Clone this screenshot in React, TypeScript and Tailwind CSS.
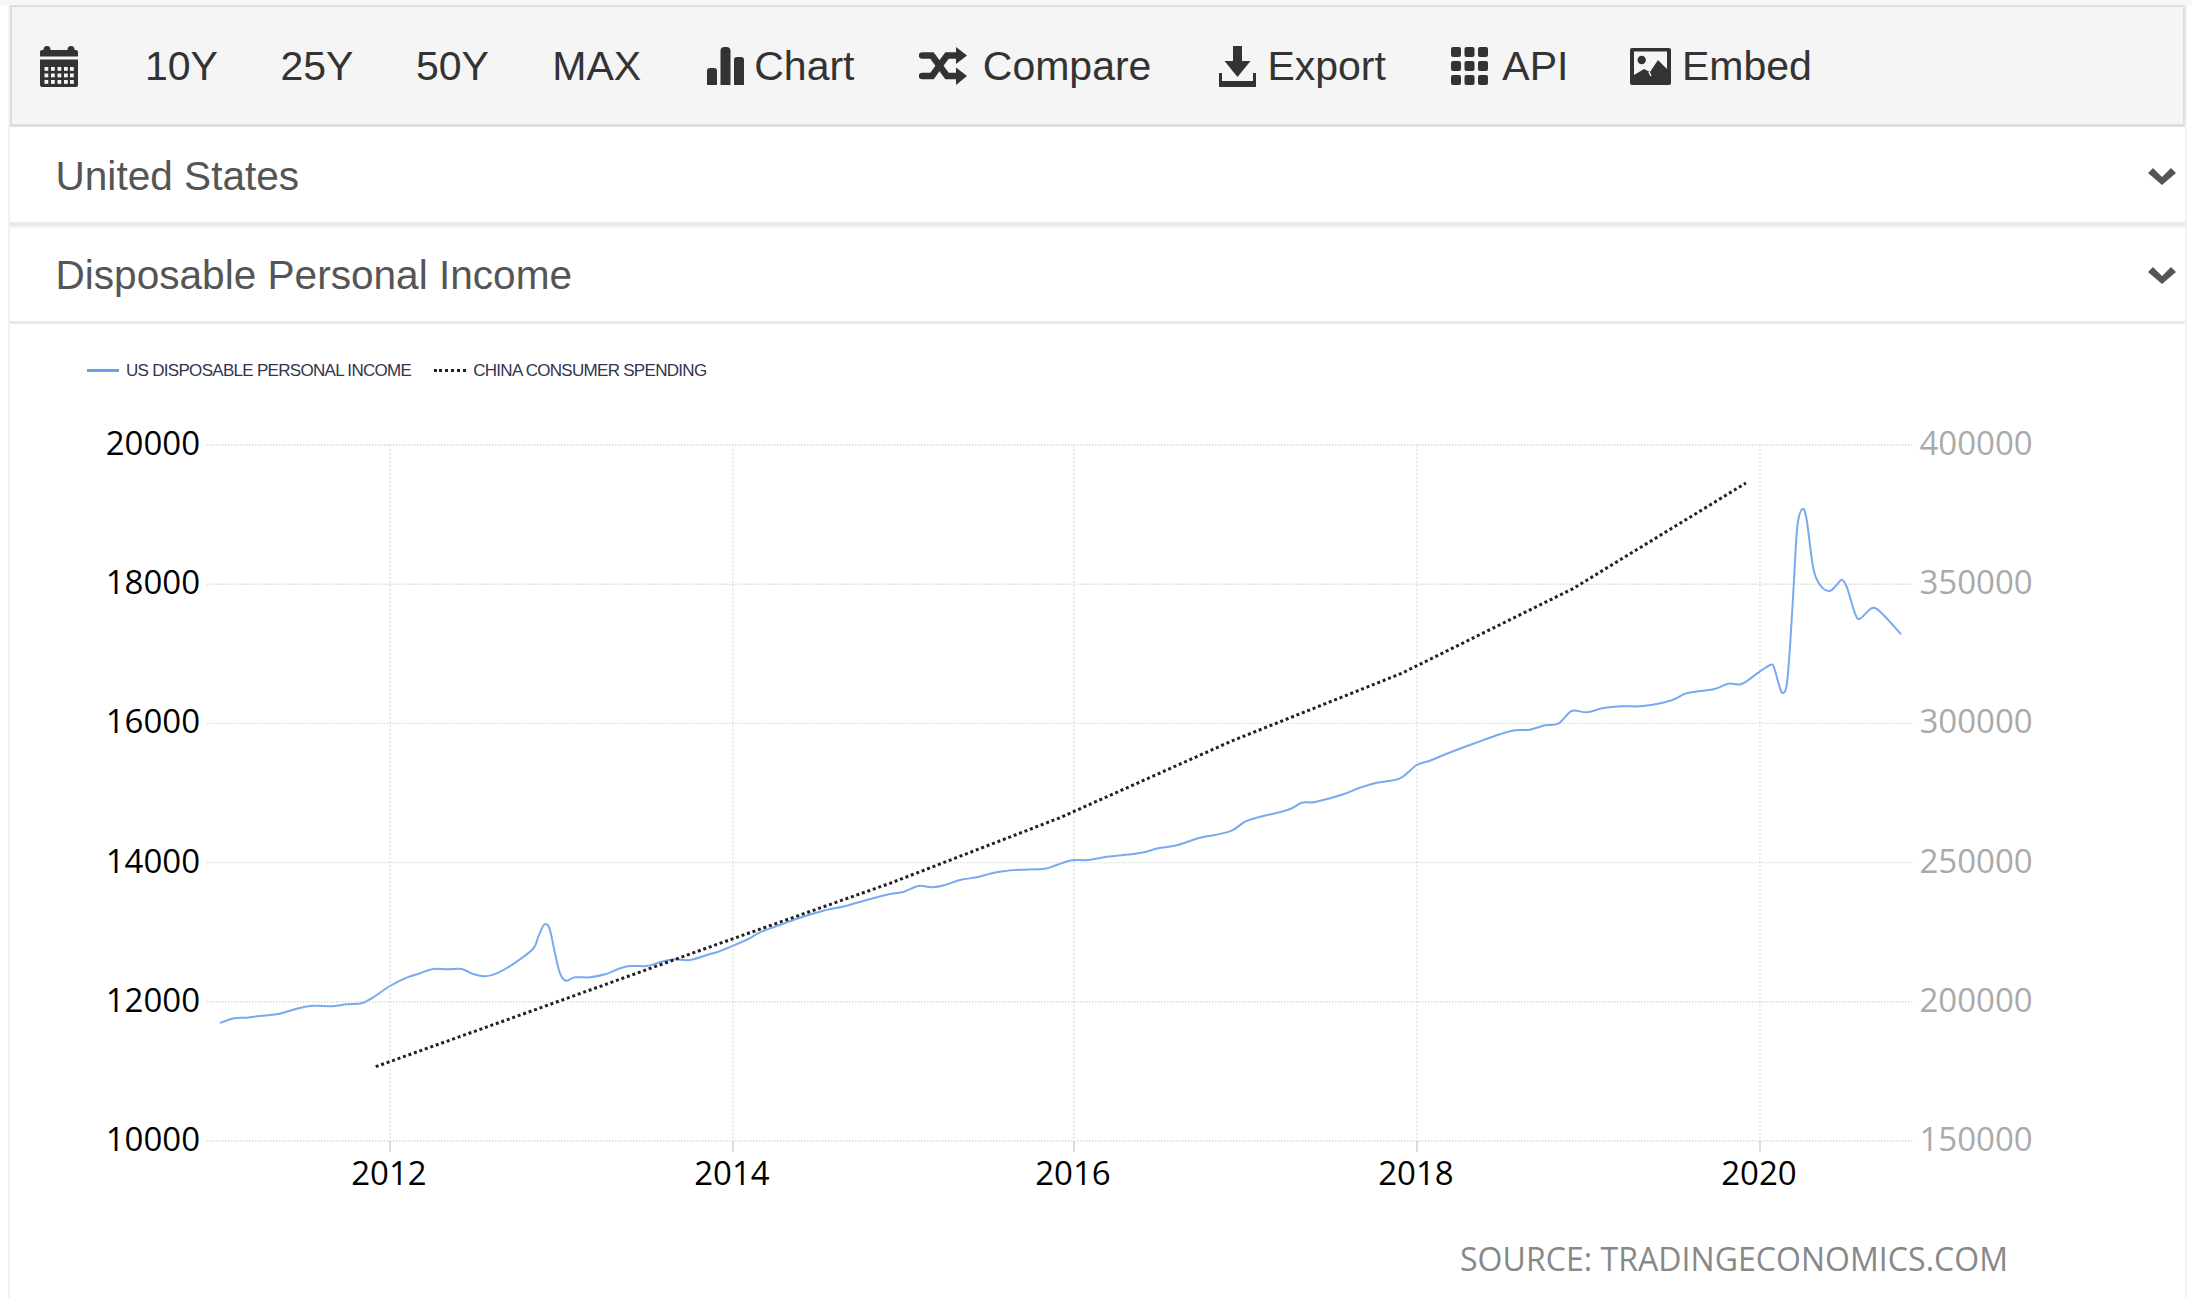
import type { ReactNode } from "react"

type Pt = [number, number]

// traced from the chart, page pixels
const income: Pt[] = [
  [220, 1023], [234, 1018.3], [246.7, 1017.7], [260, 1016], [276.7, 1014.3], [290, 1010.7], [305, 1006.7], [316.7, 1005.7],
  [331.7, 1006.3], [346.7, 1004.3], [361.7, 1003.3], [373.3, 997.3], [390, 986], [406.7, 977.7], [420, 973.3], [433.3, 969],
  [446.7, 969.3], [461.7, 969], [473.3, 974], [485, 976.3], [496.7, 973.3], [511.7, 965], [532.7, 949.3], [538.3, 936.7],
  [543.3, 925.7], [546.7, 924.3], [550, 930], [555, 953.3], [560, 973.3], [566, 980.7], [575, 977.3], [590, 977.3],
  [605, 974.3], [621.7, 967.7], [633.3, 966], [646.7, 966], [660, 962.3], [673.3, 959.3], [690, 960], [710, 954],
  [718.3, 951.7], [733.3, 945.7], [748.3, 939], [760, 932.3], [780, 925], [800, 917.7], [823.3, 910.7], [846.7, 905.7],
  [866.7, 900], [890, 894], [903.3, 892], [918.3, 886], [931.7, 887.3], [945, 885], [960, 880], [976.7, 877.3],
  [990, 873.7], [1003.3, 871.3], [1020, 869.7], [1045, 868.7], [1056.7, 865], [1071.7, 860.3], [1088.3, 860], [1106.7, 856.7],
  [1133.3, 854], [1145, 852], [1158.3, 848.3], [1176.7, 845.3], [1200, 837.8], [1215, 835], [1231.7, 830.7], [1245, 821.7],
  [1256.7, 817.7], [1288.3, 809.7], [1301.7, 802.7], [1315, 802], [1343.3, 794.3], [1360, 787.7], [1376.7, 782.7], [1400, 778.3],
  [1416.7, 765], [1430, 760.7], [1446.7, 753.7], [1473.3, 743.7], [1500, 734.3], [1515, 730.3], [1530, 729.7], [1545, 725.3],
  [1558.3, 723.7], [1571.7, 711], [1586.7, 712.3], [1603.3, 708], [1623.3, 706.3], [1643.3, 706], [1671, 700.5], [1686.7, 693.3],
  [1713.3, 689.3], [1728.3, 683.7], [1741.7, 684], [1758.3, 672.7], [1770.7, 664.7], [1774.3, 668.3], [1780, 688.3], [1783.3, 693],
  [1786.7, 685], [1790, 646.7], [1794, 580], [1797.3, 526.7], [1802.3, 509], [1806.7, 520], [1813.3, 568.3], [1820, 585],
  [1829.3, 591], [1836.7, 585], [1841.7, 579.7], [1846.7, 586.7], [1855, 613.3], [1860, 618.7], [1872.3, 608], [1881.7, 613.3], [1901, 634.3],
]

const spending: Pt[] = [
  [375.7, 1066.7], [548.3, 1005], [718, 944], [890, 883.3], [1060, 817.7], [1231.7, 741], [1401.7, 673.3], [1573, 588.6], [1746, 483],
]

const gridYs = [445, 584.2, 723.4, 862.6, 1001.8, 1141]
const leftTicks = ["20000", "18000", "16000", "14000", "12000", "10000"]
const rightTicks = ["400000", "350000", "300000", "250000", "200000", "150000"]
const years = [
  { x: 390, label: "2012" },
  { x: 733, label: "2014" },
  { x: 1074, label: "2016" },
  { x: 1417, label: "2018" },
  { x: 1760, label: "2020" },
]

function smooth(pts: Pt[]) {
  let d = `M${pts[0][0]} ${pts[0][1]}`
  for (let i = 0; i < pts.length - 1; i++) {
    const p0 = pts[i - 1] ?? pts[i]
    const p1 = pts[i]
    const p2 = pts[i + 1]
    const p3 = pts[i + 2] ?? p2
    const c1x = p1[0] + (p2[0] - p0[0]) / 6
    const c1y = p1[1] + (p2[1] - p0[1]) / 6
    const c2x = p2[0] - (p3[0] - p1[0]) / 6
    const c2y = p2[1] - (p3[1] - p1[1]) / 6
    d += ` C${c1x.toFixed(1)} ${c1y.toFixed(1)} ${c2x.toFixed(1)} ${c2y.toFixed(1)} ${p2[0]} ${p2[1]}`
  }
  return d
}

function CalendarIcon() {
  const squares = []
  for (const y of [21, 27.5, 34]) {
    for (const x of [4.5, 11, 17.5, 24, 30]) {
      squares.push(<rect key={`${x}-${y}`} x={x} y={y} width="3.8" height="3.8" fill="#f5f5f5" />)
    }
  }
  return (
    <svg width="38" height="41" viewBox="0 0 38 41" fill="#333">
      <circle cx="7" cy="3.5" r="3.5" />
      <circle cx="31" cy="3.5" r="3.5" />
      <path d="M2 4h34a2 2 0 0 1 2 2v4.500H0V6a2 2 0 0 1 2-2z" />
      <path d="M0 13.500h38V39a2 2 0 0 1-2 2H2a2 2 0 0 1-2-2z" />
      {squares}
    </svg>
  )
}

function ChartIcon() {
  return (
    <svg width="37" height="38" viewBox="0 0 37 38" fill="#333">
      <path d="M0 24a3 3 0 0 1 3-3h4a3 3 0 0 1 3 3v14H0z" />
      <path d="M13.500 4a4 4 0 0 1 4-4h2a4 4 0 0 1 4 4v34h-10z" />
      <path d="M27 13a3 3 0 0 1 3-3h4a3 3 0 0 1 3 3v25H27z" />
    </svg>
  )
}

function ShuffleIcon() {
  return (
    <svg width="48" height="39" viewBox="0 0 48 39" fill="#333">
      <path d="M3 8.500h10l15 20.500h10" fill="none" stroke="#333" strokeWidth="6.500" strokeLinecap="round" />
      <path d="M3 29h10l15-20.500h10" fill="none" stroke="#333" strokeWidth="6.500" strokeLinecap="round" />
      <path d="M37 0l11 8.500L37 17z" />
      <path d="M37 20.500l11 8.500-11 9z" />
    </svg>
  )
}

function ExportIcon() {
  return (
    <svg width="37" height="41" viewBox="0 0 37 41" fill="#333">
      <path d="M14 0h9v15h8.500L18.500 31 5.500 15H14z" />
      <path d="M0 27h3v8h31v-8h3v14H0z" />
    </svg>
  )
}

function GridIcon() {
  const cells = []
  for (const y of [0, 14, 28]) {
    for (const x of [0, 13.500, 27]) {
      cells.push(<rect key={`${x}-${y}`} x={x} y={y} width="10" height="10" rx="2" />)
    }
  }
  return (
    <svg width="37" height="38" viewBox="0 0 37 38" fill="#333">
      {cells}
    </svg>
  )
}

function PictureIcon() {
  return (
    <svg width="41" height="37" viewBox="0 0 41 37">
      <rect width="41" height="37" rx="2" fill="#333" />
      <rect x="4" y="3.500" width="33" height="27" fill="#f5f5f5" />
      <circle cx="11.700" cy="12" r="4.200" fill="#333" />
      <path d="M4 27l10-6 6 3 8-12 9 9v11H4z" fill="#333" />
      <path d="M19 24l2 4" stroke="#f5f5f5" strokeWidth="1.500" fill="none" />
    </svg>
  )
}

function Chevron() {
  return (
    <svg width="28" height="17" viewBox="0 0 28 17" fill="#555">
      <path d="M0 5l5-5 9 9 9-9 5 5-14 12z" />
    </svg>
  )
}

function ToolItem({ icon, label, className }: { icon: ReactNode; label: string; className: string }) {
  return (
    <div className={`flex items-center ${className}`}>
      {icon}
      <span>{label}</span>
    </div>
  )
}

function Selector({ label, className }: { label: string; className: string }) {
  return (
    <div className={`flex items-center justify-between pt-[4px] pr-[9px] pl-[45.500px] ${className}`}>
      <span className="text-[40.600px] leading-none text-[#555]">{label}</span>
      <Chevron />
    </div>
  )
}

export default function App() {
  return (
    <div className="h-[1298px] w-[2192px] overflow-hidden bg-white font-['Liberation_Sans',Arial,sans-serif]">
      <div className="h-[5px] bg-[#f7f7f7]" />
      <div className="mr-[5px] ml-[8px] h-[1293px] border-x-2 border-[#f3f3f3]">
        <div className="flex h-[122px] items-center gap-[62.500px] border-2 border-b-[3px] border-[#dedede] bg-[#f5f5f5] pt-[1px] pl-[28px] text-[41px] leading-none text-[#333]">
          <CalendarIcon />
          <span className="ml-[4.500px]">10Y</span>
          <span>25Y</span>
          <span>50Y</span>
          <span className="ml-[1px]">MAX</span>
          <ToolItem icon={<ChartIcon />} label="Chart" className="ml-[3.500px] gap-[10px]" />
          <ToolItem icon={<ShuffleIcon />} label="Compare" className="ml-[2.300px] gap-[15.500px]" />
          <ToolItem icon={<ExportIcon />} label="Export" className="ml-[5px] gap-[11.500px]" />
          <ToolItem icon={<GridIcon />} label="API" className="ml-[2.900px] gap-[14px]" />
          <ToolItem icon={<PictureIcon />} label="Embed" className="ml-[-1px] gap-[11px]" />
        </div>
        <Selector label="United States" className="h-[99px] border-b-[4px] border-[#e9e9ef] shadow-[0_1px_2px_#e9e9ef]" />
        <Selector label="Disposable Personal Income" className="h-[98px] border-b-[3px] border-[#e8e8ee]" />
        <div className="flex h-[90px] items-center pt-[3px] pl-[77px] text-[17px] leading-none tracking-[-0.700px] text-[#33334d]">
          <div className="mr-[7px] h-[3px] w-[32px] bg-[#6d9eeb]" />
          <span>US DISPOSABLE PERSONAL INCOME</span>
          <div className="mr-[7px] ml-[23px] w-[32px] border-t-[3px] border-dotted border-[#222]" />
          <span>CHINA CONSUMER SPENDING</span>
        </div>
        <svg width="2175" height="884" viewBox="10 414 2175 884" className="block font-['Open_Sans',sans-serif]">
          {gridYs.map((y) => (
            <line key={y} x1="207" x2="1914" y1={y} y2={y} stroke="#d8d8d8" strokeWidth="1.4" strokeDasharray="1.400 1.600" />
          ))}
          {years.map((t) => (
            <g key={t.label}>
              <line x1={t.x} x2={t.x} y1="445" y2="1141" stroke="#d8d8d8" strokeWidth="1.4" strokeDasharray="1.400 2.600" />
              <line x1={t.x} x2={t.x} y1="1141" y2="1152" stroke="#ccc" strokeWidth="1.4" />
              <text x={t.x - 1} y="1185" textAnchor="middle" className="fill-black text-[33px]">
                {t.label}
              </text>
            </g>
          ))}
          {gridYs.map((y, i) => (
            <g key={leftTicks[i]}>
              <text x="200" y={y + 10} textAnchor="end" className="fill-black text-[33px]">
                {leftTicks[i]}
              </text>
              <text x="1919.500" y={y + 10} className="fill-[#aaa] text-[33px]">
                {rightTicks[i]}
              </text>
            </g>
          ))}
          <path d={smooth(income)} fill="none" stroke="#7aa9f0" strokeWidth="2" />
          <polyline points={spending.map((p) => p.join(",")).join(" ")} fill="none" stroke="#222" strokeWidth="3" strokeDasharray="3 2.800" />
          <text x="1460" y="1271" textLength="548" lengthAdjust="spacing" className="fill-[#888] text-[32px]">
            SOURCE: TRADINGECONOMICS.COM
          </text>
        </svg>
      </div>
    </div>
  )
}
